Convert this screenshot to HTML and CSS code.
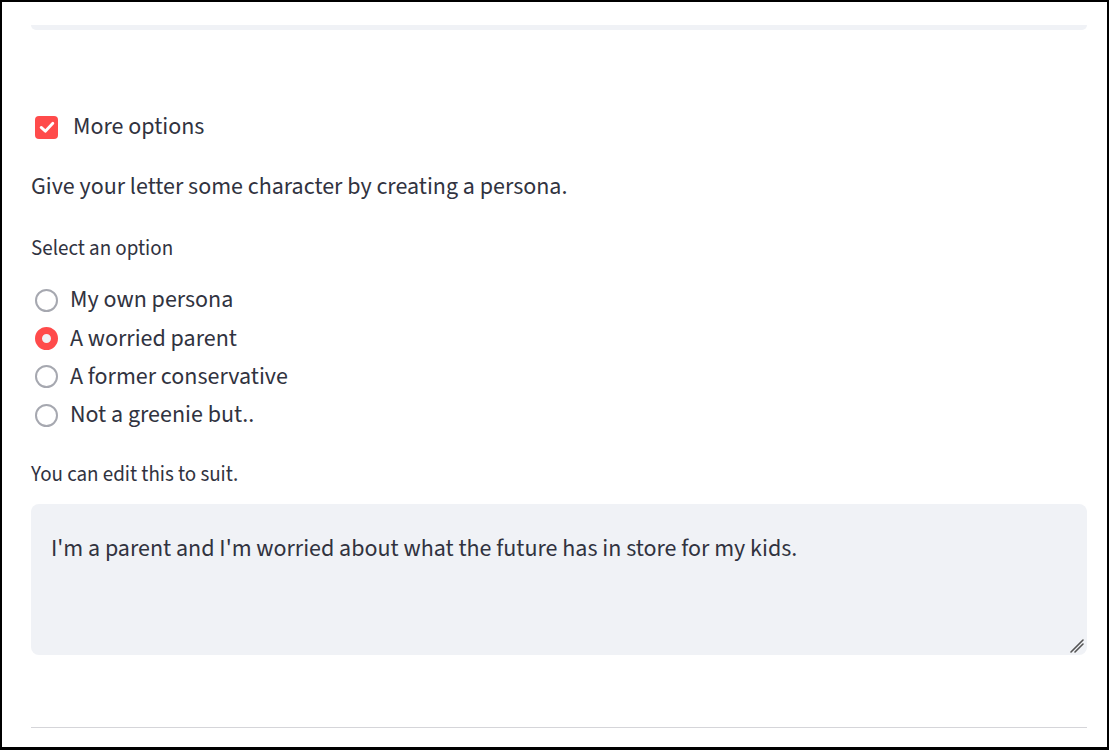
FILE: index.html
```html
<!DOCTYPE html>
<html>
<head>
<meta charset="utf-8">
<link rel="stylesheet" href="styles.css">
</head>
<body>
<div class="frame">
  <div class="topbar"></div>
  <label class="check-row">
    <span class="checkbox">
      <svg viewBox="0 0 24 24" width="20" height="20"><polyline points="5,12.5 10,17 19,7.5" fill="none" stroke="#fff" stroke-width="3.4" stroke-linecap="round" stroke-linejoin="round"/></svg>
    </span>
    <span class="check-text">More options</span>
  </label>
  <p class="intro">Give your letter some character by creating a persona.</p>
  <div class="label sel-label">Select an option</div>
  <div class="radios">
    <div class="radio"><span class="dot"></span><span class="rtext">My own persona</span></div>
    <div class="radio on"><span class="dot"></span><span class="rtext">A worried parent</span></div>
    <div class="radio"><span class="dot"></span><span class="rtext">A former conservative</span></div>
    <div class="radio"><span class="dot"></span><span class="rtext">Not a greenie but..</span></div>
  </div>
  <div class="label edit-label">You can edit this to suit.</div>
  <div class="area-wrap">
    <textarea class="area">I'm a parent and I'm worried about what the future has in store for my kids.</textarea>
    <svg class="grip" viewBox="0 0 14 14" width="14" height="14"><line x1="1" y1="13" x2="13" y2="1" stroke="#555" stroke-width="1.6" stroke-linecap="round"/><line x1="5" y1="13" x2="13" y2="5" stroke="#555" stroke-width="1.6" stroke-linecap="round"/></svg>
  </div>
  <div class="rule"></div>
</div>
</body>
</html>
```
FILE: styles.css
```css
html, body {
  margin: 0;
  padding: 0;
  background: #fff;
}
.frame {
  box-sizing: border-box;
  width: 1109px;
  height: 750px;
  border: 2px solid #000;
  border-bottom-width: 3px;
  padding: 0 20px 0 29px;
  font-family: "Source Sans Pro", "Source Sans 3", Lato, "Liberation Sans", sans-serif;
  color: #31333f;
  display: flex;
  flex-direction: column;
}
.topbar {
  margin-top: 23px;
  height: 5px;
  background: #f0f2f6;
  border-radius: 0 0 8px 8px;
}
.check-row {
  margin-top: 85px;
  height: 24px;
  display: flex;
  align-items: center;
}
.checkbox {
  margin-left: 4px;
  width: 23px;
  height: 23px;
  flex: none;
  border-radius: 4px;
  background: #ff4b4b;
  display: flex;
  align-items: center;
  justify-content: center;
}
.check-text {
  margin-left: 15px;
  font-size: 24px;
  line-height: 24px;
}
.intro {
  margin: 33px 0 0;
  font-size: 24px;
  line-height: 30px;
}
.label {
  font-size: 21px;
  line-height: 24px;
}
.sel-label {
  margin-top: 34px;
}
.radios {
  margin-top: 21px;
  display: flex;
  flex-direction: column;
}
.radio {
  height: 38.4px;
  display: flex;
  align-items: center;
}
.dot {
  margin-left: 4px;
  box-sizing: border-box;
  flex: none;
  width: 23px;
  height: 23px;
  border-radius: 50%;
  border: 2.5px solid #a6a8b0;
}
.radio.on .dot {
  border: 7px solid #ff4b4b;
  background: #f0f2f6;
}
.rtext {
  margin-left: 12px;
  font-size: 24px;
  line-height: 30px;
}
.edit-label {
  margin-top: 27px;
}
.area-wrap {
  position: relative;
  margin-top: 18px;
  height: 151px;
}
.area {
  display: block;
  box-sizing: border-box;
  height: 151px;
  width: 100%;
  border: none;
  outline: none;
  border-radius: 8px;
  background: #f0f2f6;
  padding: 30px 20px 10px;
  font-family: inherit;
  font-size: 24px;
  line-height: 30px;
  color: #31333f;
  resize: none;
}
.grip {
  position: absolute;
  right: 3px;
  bottom: 2px;
}
.rule {
  margin-top: 72px;
  height: 1px;
  background: #d5d5d9;
}
```
